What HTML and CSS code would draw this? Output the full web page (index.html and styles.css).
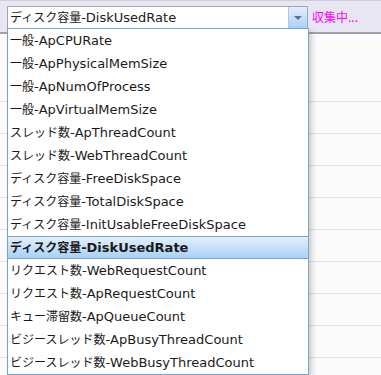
FILE: index.html
```html
<!DOCTYPE html>
<html lang="ja">
<head>
    <meta charset="UTF-8">
    <title>監視</title>
    <link rel="stylesheet" href="styles.css">
</head>
<body>
    <div class="toolbar">
        <div class="combo">
            <span class="combo-text"><span class="jp">ディスク容量</span>-DiskUsedRate</span>
            <span class="combo-btn">
                <svg width="8" height="4" viewBox="0 0 8 4"><path d="M0 0 H8 L4 4 Z" fill="#5a7594"/></svg>
            </span>
        </div>
        <span class="status">収集中...</span>
    </div>

    <div class="grid">
        <div class="row"></div>
        <div class="row"></div>
        <div class="row"></div>
        <div class="row"></div>
        <div class="row"></div>
        <div class="row"></div>
        <div class="row"></div>
        <div class="row"></div>
        <div class="row"></div>
        <div class="row"></div>
    </div>

    <ul class="dropdown">
        <li><span class="jp">一般</span>-ApCPURate</li>
        <li><span class="jp">一般</span>-ApPhysicalMemSize</li>
        <li><span class="jp">一般</span>-ApNumOfProcess</li>
        <li><span class="jp">一般</span>-ApVirtualMemSize</li>
        <li><span class="jp">スレッド数</span>-ApThreadCount</li>
        <li><span class="jp">スレッド数</span>-WebThreadCount</li>
        <li><span class="jp">ディスク容量</span>-FreeDiskSpace</li>
        <li><span class="jp">ディスク容量</span>-TotalDiskSpace</li>
        <li><span class="jp">ディスク容量</span>-InitUsableFreeDiskSpace</li>
        <li class="selected"><span class="jp">ディスク容量</span>-DiskUsedRate</li>
        <li><span class="jp">リクエスト数</span>-WebRequestCount</li>
        <li><span class="jp">リクエスト数</span>-ApRequestCount</li>
        <li><span class="jp">キュー滞留数</span>-ApQueueCount</li>
        <li><span class="jp">ビジースレッド数</span>-ApBusyThreadCount</li>
        <li><span class="jp">ビジースレッド数</span>-WebBusyThreadCount</li>
    </ul>
</body>
</html>
```

FILE: styles.css
```css
body {
    margin: 0;
    padding: 0;
    width: 381px;
    height: 375px;
    overflow: hidden;
    position: relative;
    background: #fbfbfb;
    font-family: "DejaVu Sans", "Noto Sans CJK JP", sans-serif;
    font-size: 13px;
    color: #1a1a1a;
}

.jp {
    font-family: "Noto Sans CJK JP", sans-serif;
    font-size: 12px;
    line-height: 1;
}

.toolbar {
    border-top: 1px solid #cfcddb;
    border-bottom: 2px solid #a19fad;
    background: #e8e6f3;
    display: flex;
    align-items: flex-start;
    padding-top: 5px;
    padding-left: 7px;
    height: 26px;
}

.combo {
    width: 301px;
    height: 23px;
    box-sizing: border-box;
    border: 1px solid #a3a3ad;
    background: #fff;
    display: flex;
    align-items: stretch;
}

.combo-text {
    flex: 1;
    padding-left: 2px;
    line-height: 21px;
    white-space: nowrap;
}

.combo-btn {
    width: 18px;
    border-left: 1px solid #b9c6d6;
    background: linear-gradient(#e2eefb, #a9d1f7);
    display: flex;
    align-items: center;
    justify-content: center;
}

.status {
    margin-left: 4px;
    line-height: 21px;
    font-family: "Noto Sans CJK JP", sans-serif;
    font-size: 12px;
    color: #ff00ff;
}

.grid {
    padding-top: 36px;
}

.row {
    height: 31px;
    border-bottom: 1px solid #e2e2e2;
}

.dropdown {
    position: absolute;
    top: 28px;
    left: 7px;
    width: 300px;
    margin: 0;
    padding: 0;
    list-style: none;
    background: #fff;
    border: 1px solid #7ba3c9;
    box-shadow: 3px 3px 5px rgba(0, 0, 0, 0.18);
}

.dropdown li {
    height: 23px;
    line-height: 23px;
    padding-left: 2px;
    white-space: nowrap;
}

.dropdown li.selected {
    height: 21px;
    line-height: 21px;
    font-weight: bold;
    border-top: 1px solid #7ba3c9;
    border-bottom: 1px solid #7ba3c9;
    background: linear-gradient(#e4f0fc, #a8d0f6);
}
```
